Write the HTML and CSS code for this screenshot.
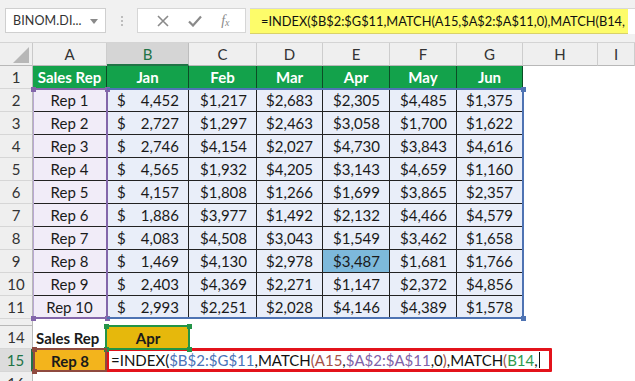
FILE: index.html
```html
<!DOCTYPE html>
<html>
<head>
<meta charset="utf-8">
<link rel="stylesheet" href="styles.css">
</head>
<body>
<div class="toolbar">
  <div class="namebox"><span>BINOM.DI...</span><svg class="dd" width="8" height="5" viewBox="0 0 8 5"><polygon points="0,0 8,0 4,5" fill="#8a8a8a"/></svg></div>
  <div class="grip"><i></i><i></i><i></i></div>
  <div class="fxbtns">
    <svg width="12" height="12" viewBox="0 0 12 12"><path d="M1 1 L11 11 M11 1 L1 11" stroke="#8a8a8a" stroke-width="1.6" fill="none"/></svg>
    <svg width="14" height="12" viewBox="0 0 14 12"><path d="M1 6.5 L5 10.5 L13 1.5" stroke="#8a8a8a" stroke-width="2.2" fill="none"/></svg>
    <span class="fx">f<sub>x</sub></span>
  </div>
  <div class="fbar"><span class="fhl">=INDEX($B$2:$G$11,MATCH(A15,$A$2:$A$11,0),MATCH(B14,</span></div>
</div>

<div class="sheet">
  <div class="corner"><svg width="16" height="16" viewBox="0 0 16 16"><polygon points="16,0 16,16 0,16" fill="#b7b7b7"/></svg></div>
  <div class="ch">A</div><div class="ch sel">B</div><div class="ch">C</div><div class="ch">D</div><div class="ch">E</div><div class="ch">F</div><div class="ch">G</div><div class="ch">H</div><div class="ch last">I</div>

  <div class="rh">1</div>
  <div class="hd first">Sales Rep</div><div class="hd">Jan</div><div class="hd">Feb</div><div class="hd">Mar</div><div class="hd">Apr</div><div class="hd">May</div><div class="hd">Jun</div>

  <div class="rh">2</div><div class="ca">Rep 1</div><div class="cb"><span>$</span><span>4,452</span></div><div class="cd">$1,217</div><div class="cd">$2,683</div><div class="cd">$2,305</div><div class="cd">$4,485</div><div class="cd">$1,375</div>
  <div class="rh">3</div><div class="ca">Rep 2</div><div class="cb"><span>$</span><span>2,727</span></div><div class="cd">$1,297</div><div class="cd">$2,463</div><div class="cd">$3,058</div><div class="cd">$1,700</div><div class="cd">$1,622</div>
  <div class="rh">4</div><div class="ca">Rep 3</div><div class="cb"><span>$</span><span>2,746</span></div><div class="cd">$4,154</div><div class="cd">$2,027</div><div class="cd">$4,730</div><div class="cd">$3,843</div><div class="cd">$4,616</div>
  <div class="rh">5</div><div class="ca">Rep 4</div><div class="cb"><span>$</span><span>4,565</span></div><div class="cd">$1,932</div><div class="cd">$4,205</div><div class="cd">$3,143</div><div class="cd">$4,659</div><div class="cd">$1,160</div>
  <div class="rh">6</div><div class="ca">Rep 5</div><div class="cb"><span>$</span><span>4,157</span></div><div class="cd">$1,808</div><div class="cd">$1,266</div><div class="cd">$1,699</div><div class="cd">$3,865</div><div class="cd">$2,357</div>
  <div class="rh">7</div><div class="ca">Rep 6</div><div class="cb"><span>$</span><span>1,886</span></div><div class="cd">$3,977</div><div class="cd">$1,492</div><div class="cd">$2,132</div><div class="cd">$4,466</div><div class="cd">$4,579</div>
  <div class="rh">8</div><div class="ca">Rep 7</div><div class="cb"><span>$</span><span>4,083</span></div><div class="cd">$4,508</div><div class="cd">$3,043</div><div class="cd">$1,549</div><div class="cd">$3,462</div><div class="cd">$1,658</div>
  <div class="rh">9</div><div class="ca">Rep 8</div><div class="cb"><span>$</span><span>1,469</span></div><div class="cd">$4,130</div><div class="cd">$2,978</div><div class="cd hit">$3,487</div><div class="cd">$1,681</div><div class="cd">$1,766</div>
  <div class="rh">10</div><div class="ca">Rep 9</div><div class="cb"><span>$</span><span>2,403</span></div><div class="cd">$4,369</div><div class="cd">$2,271</div><div class="cd">$1,147</div><div class="cd">$2,372</div><div class="cd">$4,856</div>
  <div class="rh">11</div><div class="ca">Rep 10</div><div class="cb"><span>$</span><span>2,993</span></div><div class="cd">$2,251</div><div class="cd">$2,028</div><div class="cd">$4,146</div><div class="cd">$4,389</div><div class="cd">$1,578</div>

  <div class="rh gap"></div>

  <div class="rh">14</div><div class="lbl">Sales Rep</div><div class="month">Apr</div>
  <div class="rh selrow">15</div><div class="rep">Rep 8</div>
  <div class="rh r16">16</div>

  <div class="overlay">
    <div class="rng rng-a"><i class="h tl"></i><i class="h tr"></i><i class="h bl"></i><i class="h br"></i></div>
    <div class="rng rng-b"><i class="h tr"></i><i class="h br"></i></div>
    <div class="rng rng-m"><i class="h tl"></i><i class="h tr"></i><i class="h bl"></i><i class="h br"></i></div>
    <div class="rng rng-r"><i class="h tl"></i><i class="h bl"></i></div>
    <div class="editor">=INDEX(<span class="cb1">$B$2:$G$11</span>,MATCH<span class="cr">(A15</span>,<span class="cp">$A$2:$A$11</span>,0<span class="cr">)</span>,MATCH<span class="cr">(</span><span class="cg">B14</span>,<span class="caret"></span></div>
  </div>
</div>
</body>
</html>
```
FILE: styles.css
```css
* { box-sizing: border-box; margin: 0; padding: 0; }
body {
  width: 635px; height: 381px; overflow: hidden; background: #fff;
  font-family: Lato, "Liberation Sans", sans-serif; color: #1a1a1a;
}
.toolbar {
  height: 43px; background: #f1f1f1; display: flex; align-items: flex-start;
  padding: 8px 0 0 5px; border-bottom: 1px solid #d4d4d4;
}
.namebox {
  width: 101px; height: 25px; background: #fff; border: 1px solid #cfcfcf;
  display: flex; align-items: center; justify-content: space-between;
  padding: 0 7px 0 7px; font-size: 12.5px; color: #333; letter-spacing: 0.1px;
}
.namebox .dd { margin-top: 1px; }
.grip { width: 31px; height: 25px; display: flex; flex-direction: column; align-items: center; justify-content: center; gap: 2px; }
.grip i { width: 2px; height: 2px; background: #bdbdbd; display: block; }
.fxbtns {
  width: 109px; height: 25px; background: #fff; border: 1px solid #d6d6d6;
  display: flex; align-items: center; justify-content: space-around; padding: 0 6px 0 10px;
}
.fx { font-family: "Liberation Serif", serif; font-style: italic; font-size: 14px; color: #8a8a8a; line-height: 1; }
.fx sub { font-size: 10px; vertical-align: -1px; }
.fbar {
  flex: 1; height: 26px; margin-left: 4px; background: #fff; border-top: 1px solid #d8d8d8;
  display: flex;
}
.fhl {
  width: 378px; height: 25px; background: #fdfc6a; border-bottom: 1px solid #d9d16a;
  font-size: 12.8px; line-height: 25px; padding-left: 11px; white-space: nowrap; color: #111;
}

.sheet {
  position: relative; display: grid;
  grid-template-columns: 33px 74px 82px 68px 66px 67px 67px 66px 75px 1fr;
  grid-template-rows: 23px repeat(11, 23px) 7px 23px 23px 23px;
  font-size: 15px;
}
.corner { background: #efefef; border-right: 1px solid #c9c9c9; border-bottom: 1px solid #b8b8b8; display: flex; align-items: flex-end; justify-content: flex-end; padding: 0 3px 2px 0; }
.ch {
  background: #efefef; border-right: 1px solid #cdcdcd; border-bottom: 1px solid #b8b8b8;
  display: flex; align-items: center; justify-content: center; color: #333; font-size: 15px;
}
.ch.sel { background: #d5d5d5; color: #217346; border-bottom: 2px solid #217346; border-right-color: #bdbdbd; }
.rh {
  grid-column: 1; background: #efefef; border-right: 1px solid #b8b8b8; border-bottom: 1px solid #d6d6d6;
  display: flex; align-items: center; justify-content: center; color: #333; font-size: 15px;
}
.rh.gap { border-bottom: 1px solid #b8b8b8; }
.rh.selrow { background: #dcdcdc; border-right: 2px solid #217346; color: #217346; }
.rh.r16 { align-items: flex-start; padding-top: 2px; }

.hd {
  background: #13a24b; color: #fff; font-weight: 700; display: flex; align-items: center; justify-content: center;
  border-right: 1px solid #0c4d26; border-bottom: 1px solid #0c4d26;
}
.ca {
  background: #f1ecf8; border-right: 1px solid #222; border-bottom: 1px solid #222;
  display: flex; align-items: center; justify-content: center;
}
.cb {
  background: #e9eef9; border-right: 1px solid #222; border-bottom: 1px solid #222;
  display: flex; align-items: center; justify-content: space-between; padding: 0 9px 0 10px;
}
.cd {
  background: #e9eef9; border-right: 1px solid #222; border-bottom: 1px solid #222;
  display: flex; align-items: center; justify-content: flex-end; padding-right: 9px;
}
.cd.hit { background: #7db9db; }

.lbl { font-weight: 700; display: flex; align-items: center; padding-left: 3px; white-space: nowrap; overflow: hidden; }
.month { background: #e6b80c; font-weight: 700; display: flex; align-items: center; justify-content: center; }
.rep { background: #f3b41c; font-weight: 700; display: flex; align-items: center; justify-content: center; }

.overlay {
  position: absolute; inset: 0; display: grid; pointer-events: none;
  grid-template-columns: 33px 74px 82px 68px 66px 67px 67px 66px 75px 1fr;
  grid-template-rows: 23px repeat(11, 23px) 7px 23px 23px 23px;
}
.rng { position: relative; }
.rng-a { grid-column: 2; grid-row: 3 / 13; border: 2px solid #8366aa; border-left-width: 1px; border-left-color: #b9a8d3; margin: -1px -1px 0 0; }
.rng-b { grid-column: 3 / 9; grid-row: 3 / 13; border: 2px solid #4e73b3; border-left: 0; margin: -1px -1px 0 0; }
.rng-m { grid-column: 3; grid-row: 14; border: 2px solid #239447; margin: -1px -1px -1px -2px; }
.rng-r { grid-column: 2; grid-row: 15; border: 2px solid #8f4a3f; margin: -1px 0 0 0; }
.h { position: absolute; width: 5px; height: 5px; display: block; }
.rng-a .h { background: #8366aa; }
.rng-b .h { background: #4e73b3; }
.rng-m .h { background: #239447; }
.rng-r .h { background: #8f4a3f; }
.h.tl { left: -3px; top: -3px; }
.h.tr { right: -4px; top: -3px; }
.h.bl { left: -3px; bottom: -4px; }
.h.br { right: -4px; bottom: -4px; }

.editor {
  grid-column: 3 / 11; grid-row: 15; justify-self: start; margin: -1px 0 0 -1px;
  height: 24px; background: #fff; border: 3px solid #e3131b; border-radius: 1px;
  display: flex; align-items: center; padding: 0 9px 0 2px; white-space: nowrap;
  font-size: 15px; color: #111;
}
.cb1 { color: #4a73b8; }
.cr { color: #a5524a; }
.cp { color: #7f62a8; }
.cg { color: #2f9a4d; }
.caret { display: inline-block; width: 1px; height: 16px; background: #111; margin-left: 1px; }
```
